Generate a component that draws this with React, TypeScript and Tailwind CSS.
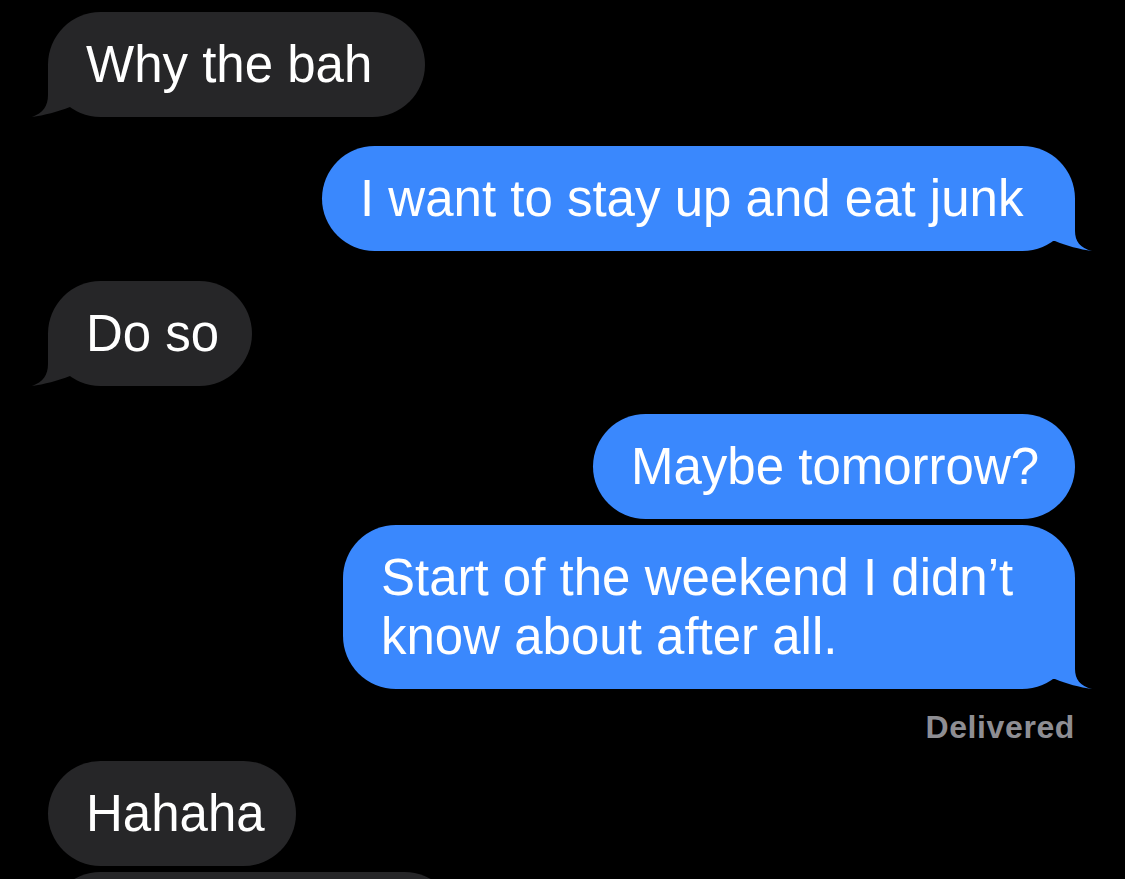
import React from "react";

const GRAY = "#262628";
const BLUE = "#3a88fd";

function Tail({ side, color }: { side: "left" | "right"; color: string }) {
  if (side === "right") {
    return (
      <svg
        className="absolute bottom-0 right-[-18px]"
        width="48"
        height="53"
        viewBox="0 0 48 53"
      >
        <path
          d="M0 0 L30 0 L30 33 C30 43 35 50 47 53 C35 51.5 21 47.5 10 43 L0 43 Z"
          fill={color}
        />
      </svg>
    );
  }
  return (
    <svg
      className="absolute bottom-0 left-[-18px]"
      width="48"
      height="53"
      viewBox="0 0 48 53"
    >
      <path
        d="M48 0 L18 0 L18 31 C18 42 13 49 2 53 C14 51.5 28 47.5 40 43 L48 43 Z"
        fill={color}
      />
    </svg>
  );
}

function Bubble({
  children,
  side,
  tail,
  className,
}: {
  children?: React.ReactNode;
  side: "left" | "right";
  tail: boolean;
  className: string;
}) {
  const color = side === "left" ? GRAY : BLUE;
  return (
    <div
      className={
        "relative rounded-[53px] pl-[38px] pr-[30px] py-[23px] text-[51px] leading-[59px] text-white " +
        (side === "left" ? "self-start bg-[#262628] " : "self-end bg-[#3a88fd] ") +
        className
      }
    >
      <span className="relative z-10">{children}</span>
      {tail && <Tail side={side} color={color} />}
    </div>
  );
}

export default function App() {
  return (
    <div
      className="h-[879px] w-full overflow-hidden bg-black"
      style={{ fontFamily: '"Liberation Sans", Arial, sans-serif' }}
    >
      <div className="flex flex-col pl-[48px] pr-[50px] pt-[12px]">
        <Bubble side="left" tail className="w-[377px]">
          Why the bah
        </Bubble>
        <Bubble side="right" tail className="mt-[29px] w-[753px]">
          I want to stay up and eat junk
        </Bubble>
        <Bubble side="left" tail className="mt-[30px] w-[204px]">
          Do so
        </Bubble>
        <Bubble side="right" tail={false} className="mt-[28px] w-[482px]">
          Maybe tomorrow?
        </Bubble>
        <Bubble side="right" tail className="mt-[6px] w-[732px]">
          Start of the weekend I didn’t know about after all.
        </Bubble>
        <div className="mt-[18px] mb-[14px] self-end text-[32px] leading-[40px] font-bold tracking-[0.6px] text-[#8e8e93]">
          Delivered
        </div>
        <Bubble side="left" tail={false} className="w-[248px]">
          Hahaha
        </Bubble>
        <div className="mt-[6px] h-[105px] w-[409px] shrink-0 self-start rounded-[53px] bg-[#262628]" />
      </div>
    </div>
  );
}
